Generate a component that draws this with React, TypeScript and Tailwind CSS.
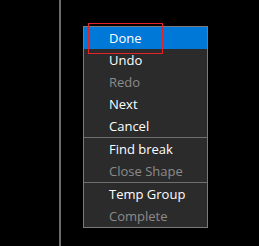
const ITEMS: ({ label: string; disabled?: boolean; active?: boolean } | 'sep')[] = [
  { label: 'Done', active: true },
  { label: 'Undo' },
  { label: 'Redo', disabled: true },
  { label: 'Next' },
  { label: 'Cancel' },
  'sep',
  { label: 'Find break' },
  { label: 'Close Shape', disabled: true },
  'sep',
  { label: 'Temp Group' },
  { label: 'Complete', disabled: true },
]

export default function App() {
  return (
    <div className="relative w-[259px] h-[246px] bg-black overflow-hidden font-['Open_Sans',sans-serif]">
      {/* split line */}
      <div className="absolute left-[59px] top-0 h-full w-[2px] bg-[#6b6b6b]" />

      {/* context menu */}
      <div className="absolute left-[83px] top-[26px] w-[125px] border border-[#7a7a7a] bg-[#2b2b2b]">
        {ITEMS.map((item, i) =>
          item === 'sep' ? (
            <div key={i} className="h-px bg-[#6f6f6f]" />
          ) : (
            <div
              key={i}
              className={
                'h-[22px] flex items-center pl-[25px] pt-px text-[13px] leading-none ' +
                (item.active ? 'bg-[#0078d7] text-white' : item.disabled ? 'text-[#8b8b8b]' : 'text-white')
              }
            >
              {item.label}
            </div>
          )
        )}
      </div>

      {/* highlight box */}
      <div className="absolute left-[88px] top-[23px] w-[75px] h-[31px] border border-[#e3232b]" />
    </div>
  )
}
